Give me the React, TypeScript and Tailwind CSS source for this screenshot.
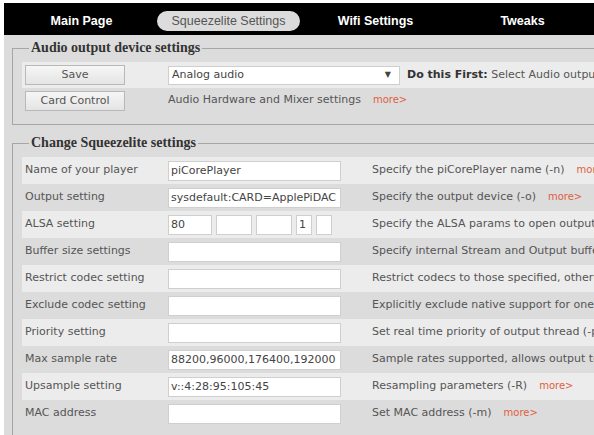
import React from "react";

const sans = "font-['DejaVu_Sans',Verdana,sans-serif]";

const tabs = ["Main Page", "Squeezelite Settings", "Wifi Settings", "Tweaks"];

interface Row {
  label: string;
  value?: string;
  desc: string;
  alsa?: boolean;
}

const rows: Row[] = [
  { label: "Name of your player", value: "piCorePlayer", desc: "Specify the piCorePlayer name (-n)" },
  { label: "Output setting", value: "sysdefault:CARD=ApplePiDAC", desc: "Specify the output device (-o)" },
  { label: "ALSA setting", alsa: true, desc: "Specify the ALSA params to open output device (-a)" },
  { label: "Buffer size settings", value: "", desc: "Specify internal Stream and Output buffer sizes in Kbytes (-b)" },
  { label: "Restrict codec setting", value: "", desc: "Restrict codecs to those specified, otherwise load all available codecs (-c)" },
  { label: "Exclude codec setting", value: "", desc: "Explicitly exclude native support for one or more codecs (-e)" },
  { label: "Priority setting", value: "", desc: "Set real time priority of output thread (-p)" },
  { label: "Max sample rate", value: "88200,96000,176400,192000", desc: "Sample rates supported, allows output to be off when squeezelite is started (-r)" },
  { label: "Upsample setting", value: "v::4:28:95:105:45", desc: "Resampling parameters (-R)" },
  { label: "MAC address", value: "", desc: "Set MAC address (-m)" },
];

function More() {
  return <span className="ml-[12px] text-[10px] text-[#e0603e]">more&gt;</span>;
}

function Box({ value, w }: { value: string; w: string }) {
  return (
    <div className={`${w} h-[20px] bg-white border border-[#cfcfcf] px-[2px] text-[11px] leading-[18px] text-[#444] overflow-hidden whitespace-nowrap`}>
      {value}
    </div>
  );
}

function Btn({ children }: { children: React.ReactNode }) {
  return (
    <div className="w-[100px] h-[20px] border border-[#b8b8b8] bg-gradient-to-b from-[#f6f6f6] to-[#e4e4e4] text-center text-[11px] leading-[18px] text-[#555]">
      {children}
    </div>
  );
}

export default function App() {
  return (
    <div className={`w-[594px] h-[435px] overflow-hidden bg-white pt-[3px] pl-[4px] ${sans}`}>
      <div className="w-[1000px] bg-[#dcdcdc] pb-4">
        {/* nav */}
        <div className="flex bg-black h-[32px] pl-[4px] pt-[8px]">
          {tabs.map((t, i) => (
            <div key={t} className="w-[147px] flex justify-center">
              {i === 1 ? (
                <div className="w-[143px] h-[20px] rounded-full bg-[#dcdcdc] text-center text-[12.5px] leading-[20px] text-[#555] font-['Liberation_Sans',Arial,sans-serif]">
                  {t}
                </div>
              ) : (
                <div className="h-[20px] text-[12.5px] leading-[20px] font-bold text-white font-['Liberation_Sans',Arial,sans-serif]">
                  {t}
                </div>
              )}
            </div>
          ))}
        </div>

        {/* audio output fieldset */}
        <fieldset className="mt-[5px] ml-[8px] border border-[#a6a6a6] pl-[9px] pb-[11px]">
          <legend className="ml-[7px] px-[2px] text-[14px] leading-[16px] font-bold text-[#333] font-['Liberation_Serif','Times_New_Roman',serif]">
            Audio output device settings
          </legend>
          <div className="mt-[6px] flex items-center h-[26px] bg-[#ececec] text-[11px] text-[#555]">
            <div className="w-[146px] pl-[3px]">
              <Btn>Save</Btn>
            </div>
            <div className="w-[232px] h-[19px] bg-white border border-[#cfcfcf] flex items-center justify-between pl-[3px] pr-[8px] text-[#444]">
              <span>Analog audio</span>
              <span className="text-[8px]">▼</span>
            </div>
            <div className="pl-[7px] whitespace-nowrap">
              <span className="font-bold text-[#333]">Do this First:</span> Select Audio output device
            </div>
          </div>
          <div className="flex items-center h-[25px] text-[11px] text-[#555]">
            <div className="w-[146px] pl-[3px]">
              <Btn>Card Control</Btn>
            </div>
            <div className="whitespace-nowrap">
              Audio Hardware and Mixer settings
              <More />
            </div>
          </div>
        </fieldset>

        {/* squeezelite fieldset */}
        <fieldset className="mt-[10px] ml-[8px] border border-[#a6a6a6] pl-[9px] pb-[11px]">
          <legend className="ml-[7px] px-[2px] text-[14px] leading-[16px] font-bold text-[#333] font-['Liberation_Serif','Times_New_Roman',serif]">
            Change Squeezelite settings
          </legend>
          <div className="mt-[6px]">
            {rows.map((r, i) => (
              <div
                key={r.label}
                className={`flex items-center h-[27px] text-[11px] text-[#555] ${i % 2 === 0 ? "bg-[#ececec]" : ""}`}
              >
                <div className="w-[146px] pl-[3px] whitespace-nowrap">{r.label}</div>
                <div className="w-[202px]">
                  {r.alsa ? (
                    <div className="flex gap-[4px]">
                      <Box value="80" w="w-[44px]" />
                      <Box value="" w="w-[36px]" />
                      <Box value="" w="w-[36px]" />
                      <Box value="1" w="w-[16px]" />
                      <Box value="" w="w-[16px]" />
                    </div>
                  ) : (
                    <Box value={r.value ?? ""} w="w-[173px]" />
                  )}
                </div>
                <div className="pl-[2px] whitespace-nowrap">
                  {r.desc}
                  <More />
                </div>
              </div>
            ))}
          </div>
        </fieldset>
      </div>
    </div>
  );
}
